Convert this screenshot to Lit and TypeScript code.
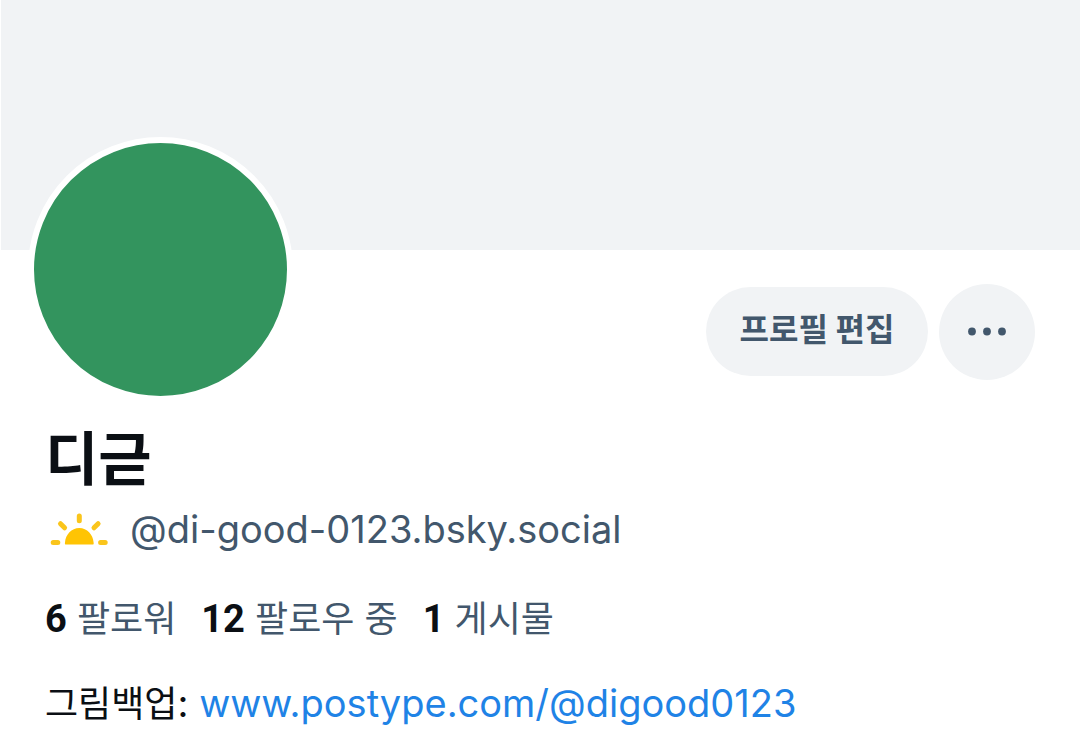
import { LitElement, html, css } from "lit";
import { customElement } from "lit/decorators.js";

@customElement("app-root")
class AppRoot extends LitElement {
  static styles = css`
    :host {
      display: block;
      background: #fff;
      color: #0b0f14;
      font-family: Inter, "Noto Sans CJK KR", sans-serif;
      font-size: 38px;
      line-height: 48px;
    }
    .banner { height: 250px; background: #f1f3f5; border-left: 1px solid #fff; }
    .actions { display: flex; justify-content: space-between; align-items: center; padding: 0 45px 0 28px; height: 163px; }
    .avatar { box-sizing: border-box; width: 265px; height: 265px; border-radius: 50%; background: #33945e; border: 6px solid #fff; margin-top: -125px; }
    .buttons { display: flex; align-items: center; gap: 11px; }
    button { border: 0; border-radius: 48px; background: #f1f3f5; color: #42576c; font: inherit; padding: 0; }
    .edit { width: 222px; height: 89px; font-size: 32px; line-height: 40px; font-weight: 700; padding-bottom: 4px; }
    .more { width: 96px; height: 96px; display: grid; place-items: center; }
    .body { padding: 0 45px; }
    h1 { margin: 0; font-size: 58px; line-height: 72px; font-weight: 700; padding-top: 10px; }
    .handle { display: flex; align-items: center; gap: 20px; color: #42576c; margin-top: 10px; }
    .sun { flex: none; margin-left: 5px; }
    .stats { display: flex; gap: 25px; margin: 42px 0 36px; color: #42576c; font-size: 36px; }
    .stats b { color: #0b0f14; font-family: Roboto, sans-serif; font-size: 38px; }
    .bio { margin: 0; }
    .bio span { font-size: 36px; }
    a { color: #1f83e6; text-decoration: none; }
  `;

  render() {
    return html`
      <header class="banner"></header>
      <main>
        <div class="actions">
          <div class="avatar" role="img" aria-label="디귿"></div>
          <div class="buttons">
            <button class="edit">프로필 편집</button>
            <button class="more" aria-label="더 보기">
              <svg width="40" height="10" viewBox="0 0 40 10" fill="currentColor"><circle cx="5" cy="4.5" r="3.9"/><circle cx="20" cy="4.5" r="3.9"/><circle cx="35" cy="4.5" r="3.9"/></svg>
            </button>
          </div>
        </div>
        <section class="body">
          <h1>디귿</h1>
          <div class="handle">
            <svg class="sun" width="60" height="36" viewBox="0 0 60 36" aria-hidden="true">
              <path d="M15.5 33.5C14.8 33.5 14.9 32.5 15 31.5C15.6 23.5 21.5 17 29.3 17S43 23.5 43.6 31.5C43.7 32.5 43.8 33.5 43.1 33.5Z" fill="#ffc404"/>
              <path d="M29.3 5V9.8M10.5 12.7L14.6 16.8M48.1 12.7L44 16.8M3.2 31.4H7.8M50.6 31.4H55.2" fill="none" stroke="#fac51c" stroke-width="5" stroke-linecap="round"/>
            </svg>
            <span>@di-good-0123.bsky.social</span>
          </div>
          <div class="stats"><span><b>6</b> 팔로워</span><span><b>12</b> 팔로우 중</span><span><b>1</b> 게시물</span></div>
          <p class="bio"><span>그림백업</span>: <a href="https://www.postype.com/@digood0123">www.postype.com/@digood0123</a></p>
        </section>
      </main>
    `;
  }
}
